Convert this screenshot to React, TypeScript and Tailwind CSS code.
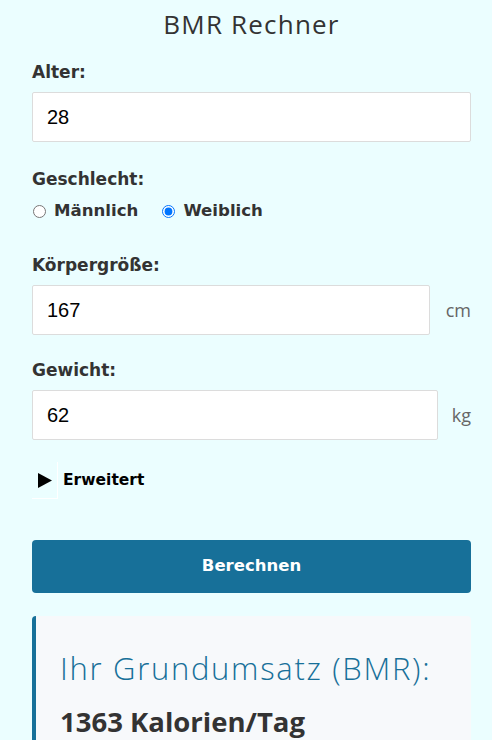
import React, { useState } from 'react';

const BOLD = "font-['DejaVu_Sans','Noto_Sans',sans-serif] font-bold";
const THIN = "font-['Open_Sans','Noto_Sans',sans-serif]";

const Label = ({ children }: { children: React.ReactNode }) => (
    <label className={`block text-[17px] ${BOLD} text-[#333] leading-6 mb-2`}>{children}</label>
);

const Field = ({ value, unit, width }: { value: string; unit?: string; width?: string }) => (
    <div className="flex items-center">
        <input
            className={`h-[50px] ${width ?? "w-full"} bg-white border border-[#dcdcdc] rounded-[2px] px-[14px] text-[20px] text-black font-['Liberation_Sans',Arial,sans-serif] outline-none`}
            defaultValue={value}
        />
        {unit && <span className={`ml-auto text-[18px] text-[#666] ${THIN}`}>{unit}</span>}
    </div>
);

const Radio = ({ checked, onChange, label }: { checked: boolean; onChange: () => void; label: string }) => (
    <label className="flex items-center gap-2">
        <input type="radio" name="g" className="w-[13px] h-[13px] m-0 ml-px accent-[#0075ff]" checked={checked} onChange={onChange} />
        {label}
    </label>
);

export default function App() {
    const [gender, setGender] = useState("w");

    return (
        <div className="min-h-[740px] bg-[#ebfeff] text-[#333]">
            <div className="pl-8 pr-[21px] pt-[6px]">
                <h1 className={`text-center text-[26px] leading-9 tracking-[1.2px] text-[#333] mb-[18px] ${THIN}`}>BMR Rechner</h1>

                <Label>Alter:</Label>
                <Field value="28" />

                <div className="mt-[25px]">
                    <Label>Geschlecht:</Label>
                    <div className={`flex items-center gap-[23px] h-6 text-[16.6px] ${BOLD}`}>
                        <Radio checked={gender === "m"} onChange={() => setGender("m")} label="Männlich" />
                        <Radio checked={gender === "w"} onChange={() => setGender("w")} label="Weiblich" />
                    </div>
                </div>

                <div className="mt-[30px]">
                    <Label>Körpergröße:</Label>
                    <Field value="167" unit="cm" width="w-[398px]" />
                </div>

                <div className="mt-[23px]">
                    <Label>Gewicht:</Label>
                    <Field value="62" unit="kg" width="w-[406px]" />
                </div>

                <details className="mt-[22px]">
                    <summary className={`list-none flex items-center gap-[5px] text-[15.5px] ${BOLD} text-black cursor-pointer`}>
                        <span className="w-[26px] h-[37px] flex items-center justify-center border-r border-b border-white">
                            <svg width="14" height="15" viewBox="0 0 14 15"><path d="M0 0 L14 7.5 L0 15 Z" fill="#000" /></svg>
                        </span>
                        Erweitert
                    </summary>
                </details>

                <button className={`mt-[41px] w-full h-[53px] rounded-[4px] bg-[#177099] text-white text-[16.5px] ${BOLD}`}>
                    Berechnen
                </button>

                <div className="mt-[23px] bg-[#f7f9fb] border-l-4 border-[#177099] rounded-[4px] px-6 pt-[32px] pb-6">
                    <h2 className={`text-[31px] font-light tracking-[1.7px] text-[#177099] leading-10 ${THIN}`}>Ihr Grundumsatz (BMR):</h2>
                    <p className={`mt-[16px] text-[27.5px] leading-9 font-['Open_Sans',sans-serif] font-bold text-[#333]`}>1363 Kalorien/Tag</p>
                </div>
            </div>
        </div>
    );
}
